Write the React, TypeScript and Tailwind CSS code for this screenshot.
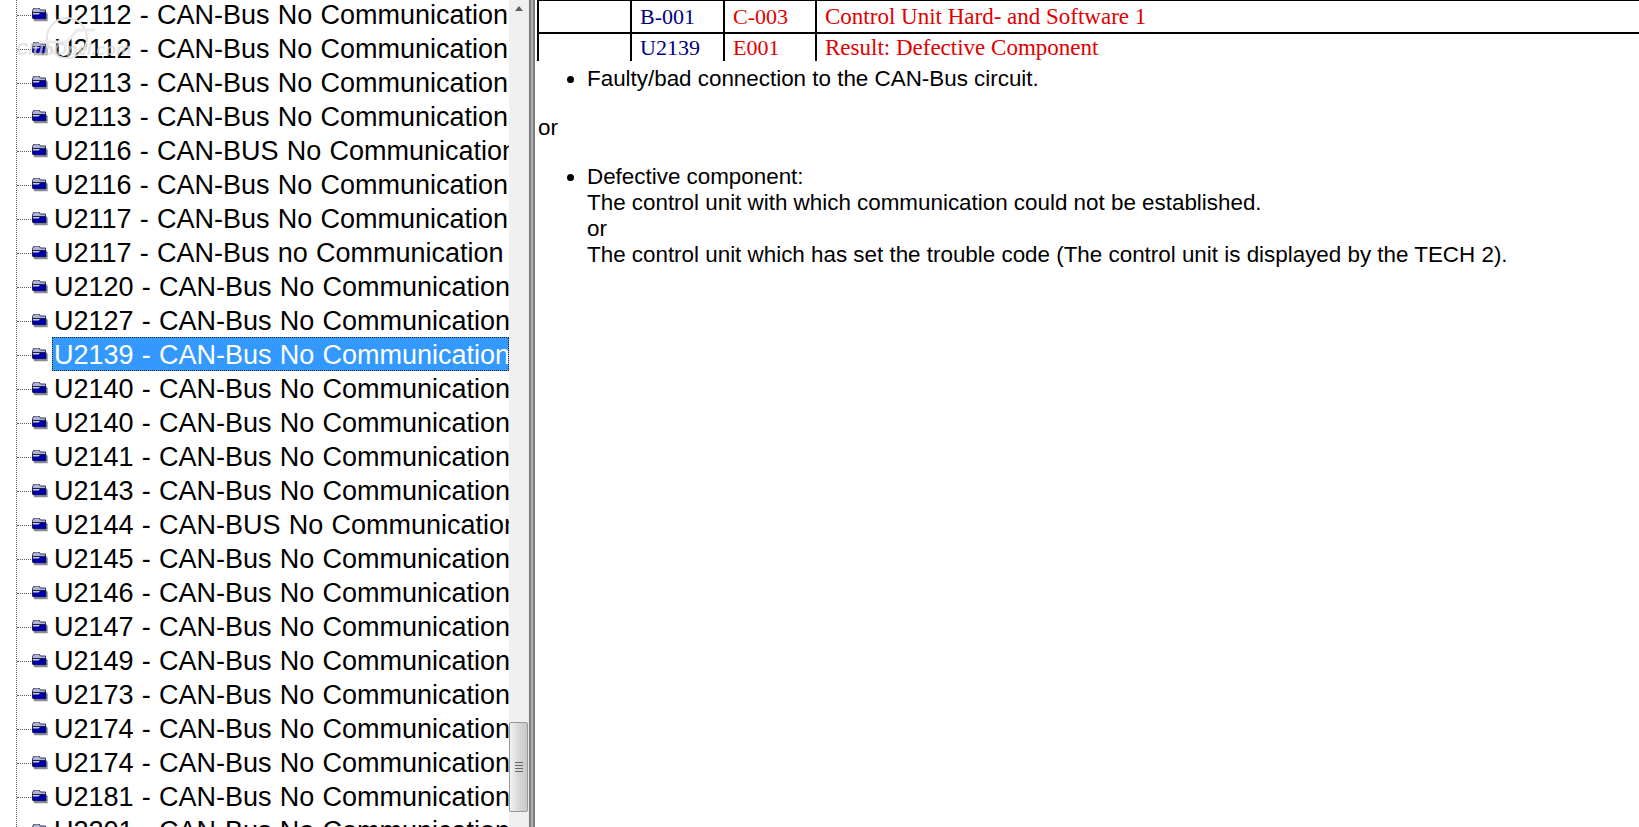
const rows = [
  'U2112 - CAN-Bus No Communication',
  'U2112 - CAN-Bus No Communication',
  'U2113 - CAN-Bus No Communication',
  'U2113 - CAN-Bus No Communication',
  'U2116 - CAN-BUS No Communication',
  'U2116 - CAN-Bus No Communication',
  'U2117 - CAN-Bus No Communication',
  'U2117 - CAN-Bus no Communication',
  'U2120 - CAN-Bus No Communication',
  'U2127 - CAN-Bus No Communication',
  'U2139 - CAN-Bus No Communication',
  'U2140 - CAN-Bus No Communication',
  'U2140 - CAN-Bus No Communication',
  'U2141 - CAN-Bus No Communication',
  'U2143 - CAN-Bus No Communication',
  'U2144 - CAN-BUS No Communication',
  'U2145 - CAN-Bus No Communication',
  'U2146 - CAN-Bus No Communication',
  'U2147 - CAN-Bus No Communication',
  'U2149 - CAN-Bus No Communication',
  'U2173 - CAN-Bus No Communication',
  'U2174 - CAN-Bus No Communication',
  'U2174 - CAN-Bus No Communication',
  'U2181 - CAN-Bus No Communication',
  'U2201 - CAN-Bus No Communication',
];

// closed folder from the old help viewer tree
function FolderIcon() {
  return (
    <svg width="17" height="15" viewBox="0 1.5 17 15" className="shrink-0">
      <path d="M3 14 H16 V7" fill="none" stroke="#8a8a8a" strokeWidth="1.4" />
      <path d="M1.5 4 L3 1.5 H8 L9.5 3.5 H14.5 V7 H1.5 Z" fill="#aeb4d0" stroke="#34385e" strokeWidth="1" />
      <path d="M1.5 6 H15 V12.5 H2.5 L1.5 11.5 Z" fill="#0000a8" stroke="#1c1f48" strokeWidth="1" />
      <path d="M2 6.5 H9 L7.5 8 H2 Z" fill="#c8cde2" />
    </svg>
  );
}

function TreeRow({ label, selected }: { label: string; selected: boolean }) {
  return (
    <div className="h-[34px] flex items-center">
      <div className="w-[14px] ml-[17px] border-t border-dotted border-[#555] shrink-0" />
      <div className="w-[21px] shrink-0">
        <FolderIcon />
      </div>
      <span
        className={
          selected
            ? 'h-[34px] -mt-[2px] pt-[2px] pl-[2px] w-full flex items-center bg-[#3399ff] text-white outline-1 outline-dotted outline-[#222] -outline-offset-1 whitespace-pre overflow-hidden'
            : 'pl-[2px] whitespace-nowrap'
        }
      >
        {label}
      </span>
    </div>
  );
}

function Scrollbar() {
  return (
    <div className="w-[19px] shrink-0 bg-[#f0f0f0] flex flex-col">
      <div className="h-[17px] flex items-center justify-center">
        <div className="w-0 h-0 border-l-[4px] border-r-[4px] border-b-[5px] border-l-transparent border-r-transparent border-b-[#606060]" />
      </div>
      <div className="mt-[705px] h-[90px] rounded-[2px] border border-[#979797] bg-gradient-to-r from-[#f2f2f2] via-[#d8d8d8] to-[#c8c8c8] flex flex-col items-center justify-center gap-[2px]">
        <div className="w-[8px] h-px bg-[#666]" />
        <div className="w-[8px] h-px bg-[#666]" />
        <div className="w-[8px] h-px bg-[#666]" />
        <div className="w-[8px] h-px bg-[#666]" />
      </div>
    </div>
  );
}

export default function App() {
  return (
    <div className="h-[827px] w-[1639px] overflow-hidden flex bg-white text-black font-['Liberation_Sans',Arial,sans-serif]">
      {/* tree pane */}
      <div className="w-[509px] shrink-0 overflow-hidden relative text-[27px] [word-spacing:0.7px]">
        <div className="absolute left-[16px] top-0 bottom-0 border-l border-dotted border-[#555]" />
        <div className="-mt-[2px] w-[509px]">
          {rows.map((label, i) => (
            <TreeRow key={i} label={label} selected={i === 10} />
          ))}
        </div>
        {/* faint site watermark over the tree */}
        <svg width="60" height="44" viewBox="0 0 60 44" className="absolute left-[37px] top-[16px] pointer-events-none">
          <circle cx="30" cy="22" r="20" fill="none" stroke="#e4e4e4" strokeWidth="2" />
          <path d="M2 26 H30 L40 14 H58" fill="none" stroke="#ececec" strokeWidth="3" />
        </svg>
        <div className="absolute left-[16px] top-[37px] text-[17px] font-bold italic text-[#d8d8d8]/70 pointer-events-none">ClubOpel.com</div>
      </div>
      <Scrollbar />
      {/* splitter */}
      <div className="w-[9px] shrink-0 flex">
        <div className="w-[1px] bg-[#e8e8e8]" />
        <div className="w-[2px] bg-[#808080]" />
        <div className="w-[2px] bg-[#b0b0b0]" />
        <div className="w-[2px] bg-[#808080]" />
      </div>
      {/* content pane */}
      <div className="flex-1 min-w-0">
        <table className="w-full table-fixed border-separate border-spacing-0 font-['Liberation_Serif','Times_New_Roman',serif] text-[23px] leading-[27px]">
          <tbody>
            <tr className="h-[34px]">
              <td className="w-[93px] border-l-2 border-t border-b-2 border-black" />
              <td className="w-[93px] border-l-2 border-t border-b-2 border-black pl-[8px] pb-[1px] text-[22px] text-[#000080]">B-001</td>
              <td className="w-[92px] border-l-2 border-t border-b-2 border-black pl-[8px] pb-[1px] text-[22px] text-[#e00000]">C-003</td>
              <td className="border-l-2 border-t border-b-2 border-black pl-[8px] pb-[1px] text-[#e00000]">Control Unit Hard- and Software 1</td>
            </tr>
            <tr className="h-[27px]">
              <td className="border-l-2 border-black" />
              <td className="border-l-2 border-black pl-[8px] text-[22px] text-[#000080]">U2139</td>
              <td className="border-l-2 border-black pl-[8px] text-[22px] text-[#e00000]">E001</td>
              <td className="border-l-2 border-black pl-[8px] text-[#e00000]">Result: Defective Component</td>
            </tr>
          </tbody>
        </table>
        <div className="text-[22.4px] leading-[26px]">
          <ul className="list-disc pl-[50px] pt-[5px]">
            <li>Faulty/bad connection to the CAN-Bus circuit.</li>
          </ul>
          <p className="mt-[23px] pl-[1px]">or</p>
          <ul className="list-disc pl-[50px] mt-[23px]">
            <li>
              Defective component:
              <br />
              The control unit with which communication could not be established.
              <br />
              or
              <br />
              The control unit which has set the trouble code (The control unit is displayed by the TECH 2).
            </li>
          </ul>
        </div>
      </div>
    </div>
  );
}
